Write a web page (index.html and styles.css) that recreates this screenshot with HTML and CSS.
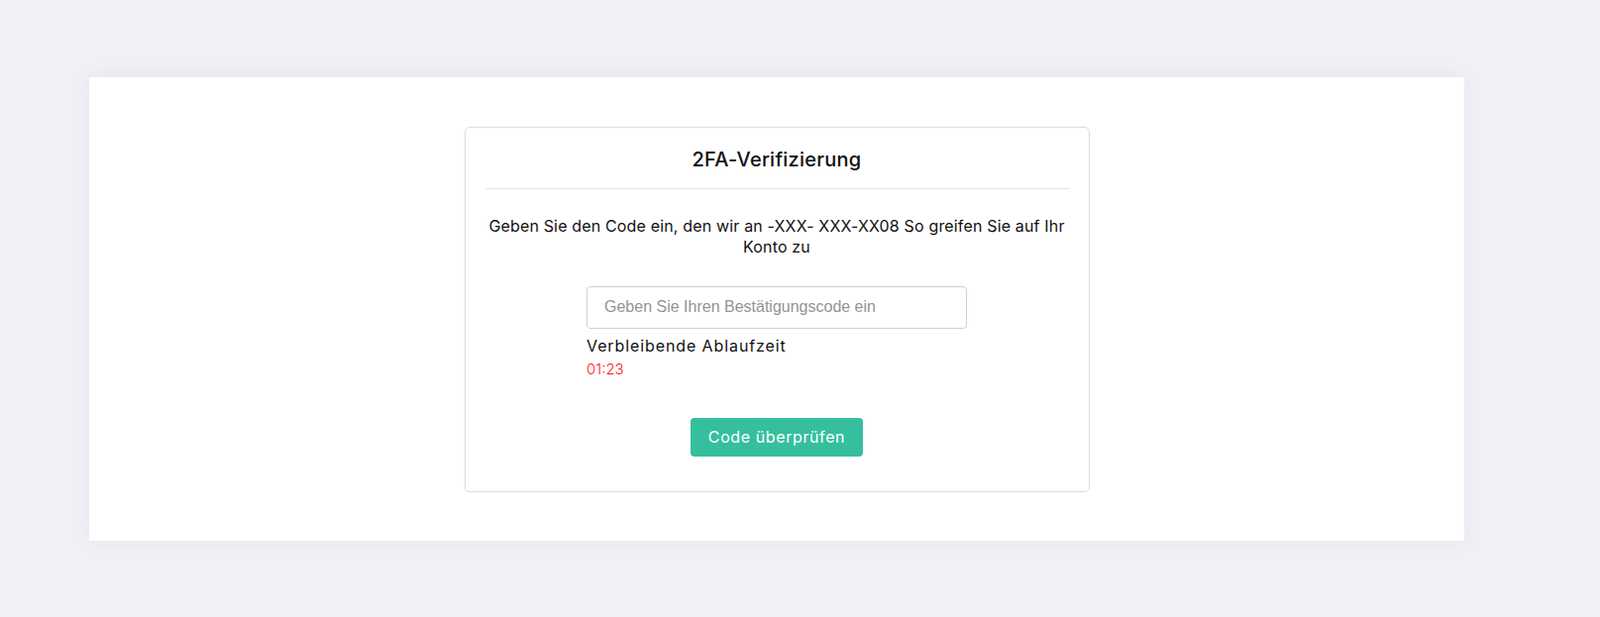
FILE: index.html
```html
<!DOCTYPE html>
<html lang="de">
<head>
<meta charset="utf-8">
<title>2FA-Verifizierung</title>
<link rel="stylesheet" href="styles.css">
</head>
<body>
<div class="page">
  <div class="panel">
    <div class="card">
      <h5 class="card-title">2FA-Verifizierung</h5>
      <hr class="divider">
      <p class="intro">Geben Sie den Code ein, den wir an -XXX- XXX-XX08 So greifen Sie auf Ihr Konto zu</p>
      <form class="form">
        <input class="code-input" type="text" placeholder="Geben Sie Ihren Bestätigungscode ein">
        <div class="expiry-label">Verbleibende Ablaufzeit</div>
        <div class="expiry-time">01:23</div>
        <div class="actions">
          <button class="btn-verify" type="button">Code überprüfen</button>
        </div>
      </form>
    </div>
  </div>
</div>
</body>
</html>
```
FILE: styles.css
```css
html, body {
  margin: 0;
  padding: 0;
}
body {
  background: #f0f1f6;
  font-family: Inter, "Noto Sans", sans-serif;
  color: #111;
}
.page {
  padding: 78px 137px 77px 90px;
}
.panel {
  background: #fff;
  height: 468px;
  box-shadow: 0 0 18px rgba(40, 45, 80, 0.06);
  display: flex;
  justify-content: center;
  align-items: center;
}
.card {
  box-sizing: border-box;
  width: 631px;
  height: 369px;
  border: 1px solid #dcdcdc;
  border-radius: 5px;
  padding: 20px 20px 0;
  display: flex;
  flex-direction: column;
}
.card-title {
  margin: 0;
  font-size: 20px;
  line-height: 24px;
  font-weight: 500;
  letter-spacing: 0.25px;
  text-align: center;
  color: #111;
}
.divider {
  margin: 17px 0 0;
  border: 0;
  border-top: 1px solid #e3e3e3;
}
.intro {
  margin: 27px 0 0;
  font-size: 16px;
  line-height: 21px;
  letter-spacing: 0.16px;
  text-align: center;
}
.form {
  width: 384px;
  align-self: center;
  margin-top: 29px;
}
.code-input {
  box-sizing: border-box;
  display: block;
  width: 384px;
  height: 43px;
  border: 1px solid #cfcfcf;
  border-radius: 4px;
  padding: 0 17px;
  font-family: "Liberation Sans", Arial, sans-serif;
  font-size: 16px;
  color: #333;
  outline: none;
}
.code-input::placeholder {
  color: #939393;
}
.expiry-label {
  margin-top: 5px;
  font-size: 16px;
  line-height: 24px;
  letter-spacing: 0.9px;
  color: #111;
}
.expiry-time {
  font-size: 15px;
  line-height: 24px;
  color: #ff1a1a;
  font-weight: 300;
}
.actions {
  display: flex;
  justify-content: center;
  margin-top: 37px;
}
.btn-verify {
  height: 39px;
  padding: 0 18px;
  border: 0;
  border-radius: 4px;
  background: #35bf9f;
  color: #fff;
  font-family: Inter, "Noto Sans", sans-serif;
  font-size: 16px;
  letter-spacing: 0.6px;
  cursor: pointer;
}
```
